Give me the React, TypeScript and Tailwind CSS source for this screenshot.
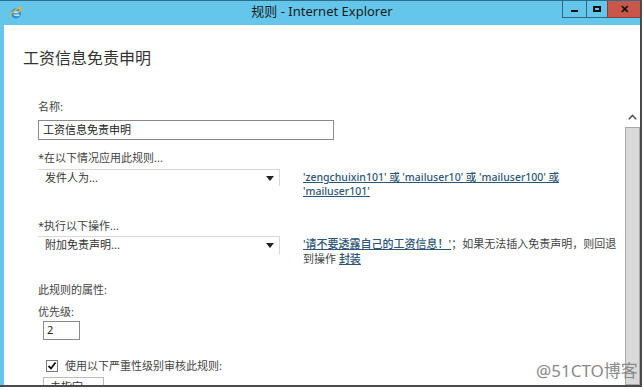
import React from "react";

const font = { fontFamily: '"Noto Sans", "Noto Sans CJK SC", sans-serif' };

function Arrow() {
  return (
    <svg width="8" height="5" viewBox="0 0 8 5" className="shrink-0">
      <path d="M0 0 L8 0 L4 5 Z" fill="#222" />
    </svg>
  );
}

function IEIcon() {
  return (
    <svg width="14" height="14" viewBox="0 0 14 14">
      <circle cx="7" cy="7.5" r="5" fill="#2f8fd8" />
      <circle cx="7" cy="7.5" r="2.6" fill="#bfe6f8" />
      <rect x="4.2" y="7.2" width="5.8" height="1.3" fill="#2f8fd8" />
      <rect x="7.5" y="8.5" width="3" height="1.6" fill="#bfe6f8" />
      <path d="M1.5 11 C0.5 7 8 2 12.5 1.5 C13.5 3 11 5 9 6" fill="none" stroke="#e8b33a" strokeWidth="1.3" />
    </svg>
  );
}

export default function App() {
  return (
    <div className="relative w-[644px] h-[390px] bg-white overflow-hidden" style={font}>
      <div className="flex flex-col w-[642px] h-[387px] border-r-2 border-b-2 border-[#4a4a4a]">
        {/* title bar */}
        <div className="flex h-[25px] shrink-0 bg-[#63c6ea] border-t border-[#2b6f8c]">
          <div className="w-[30px] flex items-center justify-center pl-[2px] pb-[1px]">
            <IEIcon />
          </div>
          <div className="flex-1 flex items-center justify-center pl-[52px] pb-[2px] text-[13px] text-[#1b1b1b] whitespace-nowrap">
            规则 - Internet Explorer
          </div>
          <div className="flex h-[17px]">
            <div className="w-[24px] flex items-end justify-center pb-[5px] border-l border-b border-[#2d6780]">
              <div className="w-[7px] h-[2px] bg-[#111]" />
            </div>
            <div className="w-[21px] flex items-center justify-center border-l border-b border-[#2d6780]">
              <div className="w-[8px] h-[6px] border-2 border-[#111]" />
            </div>
            <div className="w-[33px] flex items-center justify-center bg-[#c8574a] border-l border-b border-[#8e3c33] text-[11px] font-bold text-[#111]">
              ✕
            </div>
          </div>
        </div>
        {/* body */}
        <div className="flex flex-1 min-h-0">
          <div className="w-[4px] bg-[#63c6ea]" />
          <div className="flex-1 overflow-hidden pt-[22px] pl-[19px]">
            <div className="text-[16px] leading-[22px] text-[#333]">工资信息免责申明</div>
            <div className="pl-[15px]">
              <div className="mt-[30px] text-[11px] leading-[16px] text-[#444]">名称:</div>
              <div className="mt-[5px] w-[296px] h-[20px] border border-[#8a8a8a] flex items-center pl-[4px] text-[11px] text-[#222]">
                工资信息免责申明
              </div>
              <div className="mt-[10px] text-[11px] leading-[16px] text-[#444]">*在以下情况应用此规则...</div>
              <div className="mt-[3px] flex items-start h-[28px]">
                <div className="w-[242px] h-[17px] border-t border-r border-[#d8d8d8] flex items-center justify-between pl-[7px] pr-[5px] text-[11px] text-[#333]">
                  <span>发件人为...</span>
                  <Arrow />
                </div>
                <div className="ml-[23px] mt-[1px] text-[10.5px] leading-[14px] font-medium text-[#2d5575] underline whitespace-nowrap">
                  'zengchuixin101' 或 'mailuser10' 或 'mailuser100' 或
                  <br />
                  'mailuser101'
                </div>
              </div>
              <div className="mt-[21px] text-[11px] leading-[16px] text-[#444]">*执行以下操作...</div>
              <div className="mt-[2px] flex items-start h-[30px]">
                <div className="w-[242px] h-[18px] border-t border-r border-[#d8d8d8] flex items-center justify-between pl-[7px] pr-[5px] text-[11px] text-[#333]">
                  <span>附加免责声明...</span>
                  <Arrow />
                </div>
                <div className="ml-[23px] text-[11px] leading-[15px] text-[#444] whitespace-nowrap">
                  <span className="font-medium text-[#2d5575] underline">'请不要透露自己的工资信息！'</span>
                  ；如果无法插入免责声明，则回退
                  <br />
                  到操作 <span className="font-medium text-[#2d5575] underline">封装</span>
                </div>
              </div>
              <div className="mt-[16px] text-[11px] leading-[16px] text-[#444]">此规则的属性:</div>
              <div className="mt-[6px] text-[11px] leading-[16px] text-[#444]">优先级:</div>
              <div className="mt-[1px] ml-[5px] w-[37px] h-[19px] border border-[#8a8a8a] flex items-center pl-[3px] text-[11px] text-[#222]">
                2
              </div>
              <div className="mt-[18px] ml-[8px] flex items-center h-[16px]">
                <svg width="12" height="12" viewBox="0 0 12 12" className="shrink-0">
                  <rect x="0.5" y="0.5" width="11" height="11" fill="#fff" stroke="#777" />
                  <path d="M2.5 6 L5 8.5 L9.5 2.5" fill="none" stroke="#111" strokeWidth="1.8" />
                </svg>
                <span className="ml-[7px] text-[11px] text-[#444]">使用以下严重性级别审核此规则:</span>
              </div>
              <div className="mt-[3px] ml-[5px] w-[61px] h-[20px] border border-[#bbb] flex items-center justify-between pl-[6px] pr-[5px] text-[11px] text-[#333]">
                <span>未指定</span>
                <Arrow />
              </div>
            </div>
          </div>
          {/* scrollbar */}
          <div className="w-[15px] flex flex-col">
            <div className="h-[86px]" />
            <div className="h-[16px] flex items-start justify-center pt-[3px]">
              <svg width="9" height="6" viewBox="0 0 9 6">
                <path d="M0.8 5.2 L4.5 1.5 L8.2 5.2" fill="none" stroke="#555" strokeWidth="1.6" />
              </svg>
            </div>
            <div className="flex-1 bg-[#d9d9d9] border border-[#a9a9a9]" />
          </div>
        </div>
      </div>
      <div className="absolute left-[536px] top-[361px] text-[17px] leading-[20px] text-[#8a8a8a] whitespace-nowrap">
        @51CTO博客
      </div>
    </div>
  );
}
